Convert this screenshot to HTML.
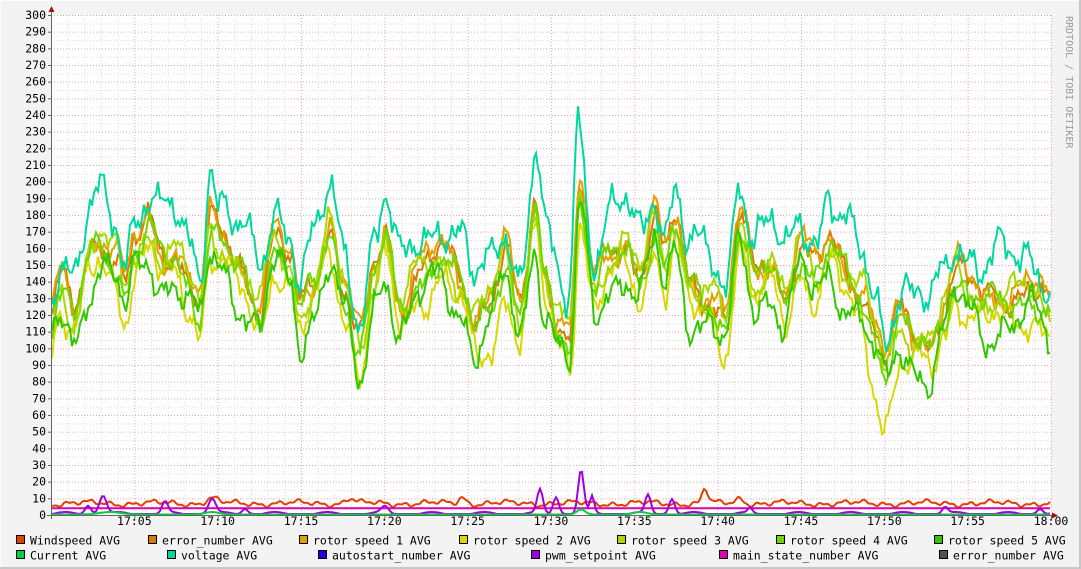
<!DOCTYPE html>
<html><head><meta charset="utf-8"><style>
html,body{margin:0;padding:0;background:#f3f3f3;}
svg{display:block;}
text{font-family:"DejaVu Sans Mono","Liberation Mono",monospace;font-size:11.5px;fill:#000;}
</style></head><body>
<svg id="g" width="1081" height="569" xmlns="http://www.w3.org/2000/svg">
<rect x="0" y="0" width="1081" height="569" fill="#f3f3f3"/>
<rect x="0" y="0" width="1081" height="1" fill="#fcfcfc"/>
<rect x="0" y="0" width="1" height="569" fill="#fcfcfc"/>
<rect x="1079" y="0" width="2" height="569" fill="#c8c8c8"/>
<rect x="0" y="567" width="1081" height="2" fill="#c8c8c8"/>
<rect x="51" y="15" width="1000" height="500" fill="#fff"/>
<g id="grid"></g>
<g id="lines" fill="none" stroke-width="2" stroke-linejoin="miter"></g>
<g id="axis"></g>
<text x="1066" y="16" transform="rotate(90 1066 16)" style="font-size:10px;fill:#999">RRDTOOL / TOBI OETIKER</text>
<g id="legend"></g>
</svg>
<script>
var NS="http://www.w3.org/2000/svg";
function el(p,n,a,t){var e=document.createElementNS(NS,n);for(var k in a)e.setAttribute(k,a[k]);if(t!=null)e.textContent=t;document.getElementById(p).appendChild(e);return e;}
var X0=51,X1=1051,Y0=515,S=500/300;
function Y(v){return Y0-v*S;}
for(var v=5;v<=300;v+=5){var y=Y(v)+0.5;el("grid","line",{x1:X0,x2:X1,y1:y,y2:y,stroke:v%10?"#dcdcdc":"#eaa8a8","stroke-dasharray":"1,2"});}
for(var m=1;m<=60;m++){var x=X0+m*1000/60+0.5;el("grid","line",{x1:x,x2:x,y1:15,y2:Y0,stroke:m%5?"#dcdcdc":"#eaa8a8","stroke-dasharray":"1,2"});}
el("axis","line",{x1:51.5,x2:51.5,y1:10,y2:519,stroke:"#666"});
el("axis","line",{x1:47,x2:1054,y1:515.5,y2:515.5,stroke:"#666"});
el("axis","path",{d:"M48.5 12 L51.5 6 L54.5 12 Z",fill:"#a01010"});
el("axis","path",{d:"M1052 512.5 L1058 515.5 L1052 518.5 Z",fill:"#a01010"});
for(var v=0;v<=300;v+=10){var y=Y(v);el("axis","line",{x1:48,x2:51,y1:y+0.5,y2:y+0.5,stroke:"#666"});el("axis","text",{x:46,y:y+4,"text-anchor":"end"},String(v));}
for(var m=5;m<=60;m+=5){var x=X0+m*1000/60;el("axis","line",{x1:x+0.5,x2:x+0.5,y1:515,y2:519,stroke:"#666"});var lab=m==60?"18:00":"17:"+(m<10?"0"+m:m);el("axis","text",{x:x,y:525,"text-anchor":"middle"},lab);}
var K=[[51,110],[60,130],[75,115],[90,150],[100,160],[115,150],[125,130],[135,155],[150,165],[160,150],[175,150],[190,135],[200,120],[210,165],[220,160],[240,140],[260,120],[275,160],[290,145],[300,115],[315,135],[330,165],[345,130],[360,95],[375,140],[385,160],[400,120],[420,140],[440,150],[460,135],[475,110],[490,125],[505,150],[520,115],[535,175],[545,135],[560,110],[570,100],[580,190],[595,130],[610,150],[625,155],[640,140],[655,170],[665,145],[675,170],[690,130],[710,125],[725,110],[740,170],[755,135],[770,145],[785,125],[800,155],[815,140],[830,155],[845,140],[860,130],[875,105],[885,85],[900,110],[915,100],[930,95],[945,120],[955,140],[970,130],[985,120],[1000,125],[1015,125],[1030,130],[1051,115]];
function base(x){for(var i=0;i<K.length-1;i++){if(x<=K[i+1][0]){var t=(x-K[i][0])/(K[i+1][0]-K[i][0]);t=t*t*(3-2*t);return K[i][1]+(K[i+1][1]-K[i][1])*t;}}return K[K.length-1][1];}
function noise(x,s){return Math.sin(x*0.21+s)*5+Math.sin(x*0.083+s*2.3)*7+Math.sin(x*0.47+s*1.7)*3+Math.sin(x*1.3+s*4.1)*2+Math.sin(x*0.9+s*0.7)*1.5;}
function series(fn,col){var d="";for(var x=X0+1;x<=X1;x+=2){var v=fn(x);d+=(d?"L":"M")+x+" "+Y(v).toFixed(1);}el("lines","path",{d:d,stroke:col});}
function bump(x,c,w,h){var d=(x-c)/w;return h*Math.exp(-d*d);}
series(function(x){return 7+Math.sin(x*0.3)*1+Math.sin(x*0.09)*1+Math.sin(x*0.7)*0.6+bump(x,705,4,9)+bump(x,350,6,3)+bump(x,462,5,4)+bump(x,212,8,3)+bump(x,740,6,3);},"#e04000");
series(function(x){return 4;},"#e000b0");
series(function(x){return Math.max(0,0.6+Math.max(0,Math.sin(x*0.12))*1.2+bump(x,103,5,11)+bump(x,88,4,5)+bump(x,165,4,7)+bump(x,212,5,9)+bump(x,245,4,3)+bump(x,385,5,4)+bump(x,540,4,14)+bump(x,556,4,10)+bump(x,581,4,26)+bump(x,592,3,10)+bump(x,648,4,11)+bump(x,672,4,9)+bump(x,750,3,3)+bump(x,945,4,4)+bump(x,1040,4,3));},"#a000e0");
series(function(x){return Math.max(0,0.3+bump(x,110,15,1.5)+bump(x,212,10,1.5)+bump(x,581,6,3)+bump(x,640,10,1.5));},"#00d040");
series(function(x){return base(x)+8+noise(x,1.0);},"#d87a00");
series(function(x){return base(x)+10+noise(x,1.4);},"#e0a000");
series(function(x){return base(x)-8-bump(x,885,25,20)-bump(x,490,20,15)+noise(x,3.1)*1.1;},"#d8d800");
series(function(x){return base(x)+6+noise(x,2.2);},"#a8d800");
series(function(x){return base(x)+3+noise(x,0.5);},"#6cd800");
series(function(x){return base(x)-10+noise(x,4.4)*1.2-bump(x,360,15,10);},"#30c800");
series(function(x){return base(x)+28+noise(x,5.5)*1.4+bump(x,576,5,45)+bump(x,538,5,20)+bump(x,210,5,25)+bump(x,738,6,15)+bump(x,828,5,15);},"#00d8a0");
var L=[[16,540,"#e04000","Windspeed AVG"],[148,540,"#d87a00","error_number AVG"],[299,540,"#e0a000","rotor speed 1 AVG"],[459,540,"#d8d800","rotor speed 2 AVG"],[617,540,"#a8d800","rotor speed 3 AVG"],[776,540,"#6cd800","rotor speed 4 AVG"],[934,540,"#30c800","rotor speed 5 AVG"],
[16,555,"#00d040","Current AVG"],[167,555,"#00d8a0","voltage AVG"],[318,555,"#2000e0","autostart_number AVG"],[531,555,"#a000e0","pwm_setpoint AVG"],[719,555,"#e000b0","main_state_number AVG"],[939,555,"#505050","error_number AVG"]];
L.forEach(function(l){el("legend","rect",{x:l[0]+0.5,y:l[1]-4.5,width:8,height:8,fill:l[2],stroke:"#000"});el("legend","text",{x:l[0]+14,y:l[1]+4.5},l[3]);});
</script>
</body></html>
